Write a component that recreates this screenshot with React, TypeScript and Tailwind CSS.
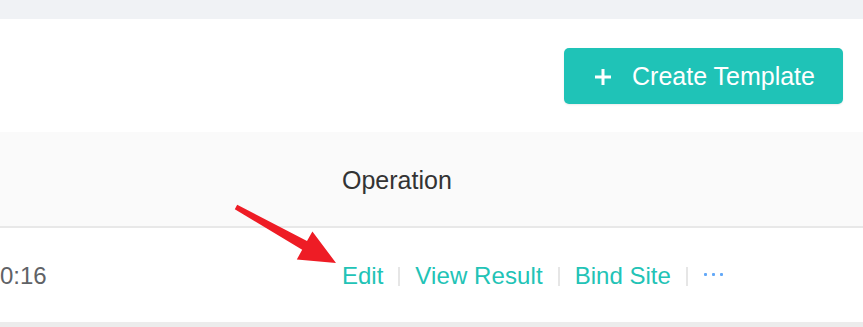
import React from 'react';

const Sep = () => <span className="mx-[15px] inline-block h-[19px] w-[2px] bg-[#e6e6e6]" />;

const Arrow = () => (
  <svg className="pointer-events-none absolute left-0 top-0" width="863" height="327" viewBox="0 0 863 327">
    <polygon
      fill="#ee1c25"
      points="237.2,204.8 307,241 312.4,231.4 336,263 296.8,259.4 302.2,249.8 234.8,209.2"
    />
  </svg>
);

export default function App() {
  return (
    <div className="relative h-[327px] w-[863px] overflow-hidden bg-white" style={{ fontFamily: '"Liberation Sans", Arial, sans-serif' }}>
      <div className="h-[19px] bg-[#f0f2f5]" />
      <div className="flex h-[113px] items-start justify-end pr-[20px] pt-[29px]">
        <button className="flex h-[56px] w-[279px] items-center rounded-[5px] bg-[#1fc3b7] pl-[30px] pt-[2px] text-[25px] text-white shadow-[0_1px_2px_rgba(0,0,0,0.08)]">
          <svg width="18" height="18" viewBox="0 0 18 18" className="mr-[20px]">
            <path d="M9 1v16M1 9h16" stroke="white" strokeWidth="3" />
          </svg>
          Create Template
        </button>
      </div>
      <div className="flex h-[96px] items-center border-b-2 border-[#e8e8e8] bg-[#fafafa] pt-[4px] text-[25px] text-[#333]">
        <div className="w-[342px]" />
        <div>Operation</div>
      </div>
      <div className="flex h-[94px] items-center pt-[2px] text-[24px]">
        <div className="w-[342px] text-[#606266]">0:16</div>
        <div className="flex items-center text-[#22c3b6]">
          <span>Edit</span>
          <Sep />
          <span className="tracking-[0.1px]">View Result</span>
          <Sep />
          <span>Bind Site</span>
          <Sep />
          <span className="mb-[3px] flex gap-[5px] pl-[1px]">
            <span className="h-[3px] w-[3px] rounded-[1px] bg-[#63a9f8]" />
            <span className="h-[3px] w-[3px] rounded-[1px] bg-[#63a9f8]" />
            <span className="h-[3px] w-[3px] rounded-[1px] bg-[#63a9f8]" />
          </span>
        </div>
      </div>
      <div className="h-[5px] bg-[#ececec]" />
      <Arrow />
    </div>
  );
}
